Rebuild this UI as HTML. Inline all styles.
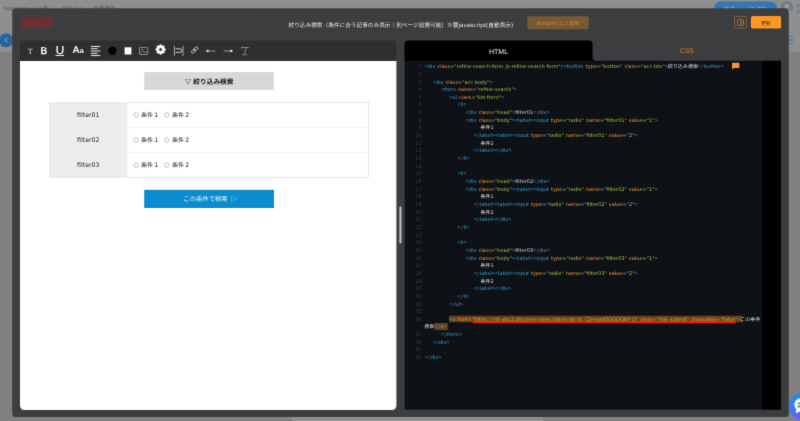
<!DOCTYPE html>
<html lang="ja">
<head>
<meta charset="utf-8">
<title>絞り込み検索</title>
<style>
html,body{margin:0;padding:0;width:800px;height:421px;overflow:hidden;background:#818181;}
#wrap{position:absolute;left:0;top:0;width:800px;height:421px;overflow:hidden;filter:url(#soft);}
#stage{position:absolute;left:0;top:0;width:8000px;height:4210px;transform:scale(0.1);transform-origin:0 0;overflow:hidden;text-rendering:geometricPrecision;
 font-family:"Liberation Sans","Noto Sans CJK JP",sans-serif;color:#fff;}
#stage div,#stage svg,#stage span.ab{position:absolute;box-sizing:border-box;}
.c{display:flex;align-items:center;justify-content:center;white-space:nowrap;}
.ab{position:absolute;}
.bgtxt{color:#5e5e62;font-size:55px;white-space:nowrap;line-height:1.1;}
.modal{background:#3c3d3f;border-radius:36px;}
.btn{border-radius:16px;font-size:50px;}
.cl{white-space:pre;font-family:"DejaVu Sans","Noto Sans CJK JP",sans-serif;font-size:50px;word-spacing:4.5px;line-height:76.5px;height:76.5px;color:#c9c9c9;}
.cl .p{font-family:"Liberation Sans",sans-serif;font-size:52px;}
.cl .p.o,.cl .p.q{font-family:"DejaVu Sans",sans-serif;font-size:50px;}
.cl .sl{display:inline-block;width:28px;text-align:center;}
.ln{left:4060px;width:156px;text-align:right;font-family:"DejaVu Sans",sans-serif;font-size:50px;line-height:76.5px;height:76.5px;color:#383e46;}
.t{color:#36a2da;} .a{color:#ee9a40;} .s{color:#aebf44;} .o{color:#8a9097;} .x{color:#d0d0d0;} .j{color:#d4d4d4;}
.hl{background:#6c3f17;padding:5.5px 4.5px 7.5px;}
.ul{}
.tb{color:#fff;line-height:1;white-space:nowrap;}
.cell{font-size:61px;color:#161616;white-space:nowrap;line-height:1;}
.rd{border:4.5px solid #6a6a6a;border-radius:50%;background:#fff;}
.dj{font-family:'DejaVu Sans',sans-serif;}
#title .dj,.btn .dj{position:relative;top:5px;}
.chat{border-radius:50%;background:linear-gradient(180deg,#1f8cf4 0%,#2e83f6 45%,#6a5cf2 100%);}
</style>
</head>
<body>

<svg width="0" height="0" style="position:absolute" aria-hidden="true"><filter id="soft" x="0" y="0" width="100%" height="100%" color-interpolation-filters="sRGB"><feConvolveMatrix order="3" kernelMatrix="1 8 1 8 64 8 1 8 1" divisor="100" edgeMode="duplicate" preserveAlpha="false"/></filter></svg>
<div id="wrap">
<div id="stage">
<!-- underlying page, dimmed by overlay -->
<div style="left:0px;top:0px;width:8000px;height:519px;background:#8f8f8f"></div>
<div style="left:0px;top:519px;width:8000px;height:3691px;background:#818181"></div>
<div style="left:0px;top:184px;width:8000px;height:4px;background:#898989"></div>
<div style="left:2917px;top:600px;width:2512px;height:3610px;background:#8f8f8f"></div>
<div class="bgtxt" style="left:40px;top:53px;font-weight:bold;font-size:50px;letter-spacing:1px">beyond</div>
<div class="bgtxt" style="left:216px;top:53px">ページ一覧</div>
<div class="bgtxt" style="left:616px;top:53px">デザイン</div>
<div class="bgtxt" style="left:934px;top:53px">外部連携</div>
<div class="c" style="left:7142px;top:16px;width:628px;height:124px;background:#3377b6;border-radius:62px;color:#a9bfd6;font-size:54px;padding-top:14px;">新規ページを追加</div>
<div style="left:7807px;top:13px;width:124px;height:124px;background:#747b83;border-radius:50%;overflow:hidden"><div style="left:39px;top:26px;width:46px;height:46px;background:#989ea4;border-radius:50%"></div><div style="left:19px;top:80px;width:86px;height:80px;background:#989ea4;border-radius:50%"></div></div>
<div class="bgtxt" style="left:7966px;top:22px;font-size:50px;color:#666">test</div>
<div class="bgtxt" style="left:7966px;top:86px;font-size:50px;color:#666">demo</div>
<div style="left:-10px;top:332px;width:140px;height:140px;background:#28649f;border-radius:50%"></div>
<svg class="ab" style="left:20px;top:360px;width:90px;height:80px" viewBox="2 36 9 8" ><path d="M7.6 37.6 L5.2 40.1 L7.6 42.6" fill="none" stroke="#93aec9" stroke-width="0.9"/></svg>
<svg class="ab" style="left:7860px;top:340px;width:120px;height:160px" viewBox="786 34 12 16" ><circle cx="790.3" cy="37.9" r="2.0" fill="none" stroke="#3c7dbd" stroke-width="1"/><circle cx="790.3" cy="42.4" r="2.0" fill="none" stroke="#3c7dbd" stroke-width="1"/></svg>

<!-- modal -->
<div class="modal" style="left:122px;top:83px;width:7766px;height:4087px;"></div>
<div class="btn c" style="left:200px;top:164px;width:331px;height:119px;background:#643134;color:#c4132b;padding-top:10px;">閉じる</div>
<div class="c" id="title" style="left:2004px;top:199px;width:4009px;height:100px;font-size:56.7px;color:#e6e6e6;">絞り込み検索（条件に合う記事のみ表示｜別ページ設置可能）※要<span class="dj">javascript(</span>自動表示<span class="dj">)</span></div>
<div class="btn c" style="left:5273px;top:162px;width:615px;height:130px;background:#775936;color:#d98c2b;font-size:50px;"><span class='dj'>Widget</span>として登録</div>
<svg class="ab" style="left:7340px;top:159px;width:131px;height:128px" viewBox="734 15.9 13.100000000000023 12.799999999999999" ><rect x="734.35" y="16.3" width="12.35" height="12.0" rx="1.6" fill="none" stroke="#b9782c" stroke-width="0.7"/><rect x="737.5" y="19.3" width="6.2" height="6.1" rx="0.5" fill="none" stroke="#d58a2a" stroke-width="0.6"/><path d="M740.4 19.3 V25.4 M740.4 21.4 H743.7 M740.4 23.4 H743.7" stroke="#d58a2a" stroke-width="0.5" fill="none"/></svg>
<div class="btn c" style="left:7509px;top:161px;width:302px;height:123px;background:#ff9823;color:#4a3210;padding-top:16px;">更新</div>

<!-- left: toolbar + preview -->
<div style="left:200px;top:406px;width:3764px;height:214px;background:#2e302f;border-radius:40px 40px 0 0;"></div>
<div style="left:200px;top:611px;width:3764px;height:3488px;background:#fff;border-radius:0 0 42px 42px;"></div>
<div class="tb" style="left:277px;top:472px;font-family:'Liberation Serif',serif;font-size:80px;color:#dedede">T</div>
<div class="tb" style="left:406px;top:456px;font-size:100px;-webkit-text-stroke:3.5px #fff">B</div>
<div class="tb" style="left:558px;top:444px;font-size:116px;-webkit-text-stroke:2.2px #fff">U</div>
<div style="left:556px;top:549px;width:84px;height:10px;background:#fff"></div>
<div class="tb" style="left:726px;top:444px;font-weight:bold;font-size:100px">A<span style="font-size:72px">a</span></div>
<svg class="ab" style="left:890px;top:440px;width:130px;height:140px" viewBox="89 44 13 14" ><rect x="90.9" y="45.949999999999996" width="9.40" height="0.9" fill="#fff"/><rect x="90.9" y="48.25" width="6.70" height="0.9" fill="#fff"/><rect x="90.9" y="50.55" width="9.40" height="0.9" fill="#fff"/><rect x="90.9" y="52.849999999999994" width="6.70" height="0.9" fill="#fff"/><rect x="90.9" y="55.15" width="9.40" height="0.9" fill="#fff"/></svg>
<svg class="ab" style="left:1060px;top:440px;width:140px;height:140px" viewBox="106 44 14 14" ><circle cx="112.4" cy="50.8" r="4.15" fill="#000"/></svg>
<svg class="ab" style="left:1230px;top:450px;width:100px;height:120px" viewBox="123 45 10 12" ><rect x="124.6" y="47.3" width="6.8" height="7.2" fill="#fff"/></svg>
<svg class="ab" style="left:1370px;top:450px;width:130px;height:120px" viewBox="137 45 13 12" ><rect x="139.4" y="47.4" width="8.3" height="7.1" rx="0.9" fill="none" stroke="#a9a9a9" stroke-width="0.75"/><path d="M139.8 53.6 L142.6 50.6 L144.6 52.6 L145.8 51.6 L147.4 53.4" fill="none" stroke="#a9a9a9" stroke-width="0.7"/><circle cx="142.0" cy="49.4" r="0.7" fill="#a9a9a9"/></svg>
<svg class="ab" style="left:1530px;top:420px;width:150px;height:150px" viewBox="153 42 15 15" ><path d="M159.77 44.72 L161.43 44.72 L161.53 45.61 L162.69 46.09 L163.39 45.53 L164.57 46.71 L164.01 47.41 L164.49 48.57 L165.38 48.67 L165.38 50.33 L164.49 50.43 L164.01 51.59 L164.57 52.29 L163.39 53.47 L162.69 52.91 L161.53 53.39 L161.43 54.28 L159.77 54.28 L159.67 53.39 L158.51 52.91 L157.81 53.47 L156.63 52.29 L157.19 51.59 L156.71 50.43 L155.82 50.33 L155.82 48.67 L156.71 48.57 L157.19 47.41 L156.63 46.71 L157.81 45.53 L158.51 46.09 L159.67 45.61 Z M162.30 49.5 A1.7 1.7 0 1 0 158.90 49.5 A1.7 1.7 0 1 0 162.30 49.5 Z" fill="#fff" fill-rule="evenodd" stroke="#fff" stroke-width="0.5" stroke-linejoin="round"/></svg>
<svg class="ab" style="left:1720px;top:440px;width:140px;height:140px" viewBox="172 44 14 14" ><path d="M174.4 45.9 V55.9 M183.0 45.9 V55.9" stroke="#c8c8c8" stroke-width="0.8" fill="none"/><path d="M175.6 48.8 H180.0 A1.8 1.8 0 0 1 180.0 52.4 H175.6" stroke="#d0d0d0" stroke-width="0.95" fill="none"/></svg>
<svg class="ab" style="left:1890px;top:440px;width:110px;height:120px" viewBox="189 44 11 12" ><g transform="rotate(-45 194.55 50.05)" fill="none" stroke="#e0e0e0" stroke-width="0.8"><rect x="190.75" y="48.75" width="4.4" height="2.6" rx="1.3"/><rect x="193.95" y="48.75" width="4.4" height="2.6" rx="1.3"/></g></svg>
<svg class="ab" style="left:2040px;top:460px;width:130px;height:100px" viewBox="204 46 13 10" ><path d="M207.2 51 H215.4" stroke="#bdbdbd" stroke-width="0.75"/><path d="M205.8 51 L208.4 49.6 V52.4 Z" fill="#fff"/></svg>
<svg class="ab" style="left:2220px;top:460px;width:130px;height:100px" viewBox="222 46 13 10" ><path d="M223.6 51 H231.6" stroke="#bdbdbd" stroke-width="0.75"/><path d="M233.1 51 L230.5 49.6 V52.4 Z" fill="#fff"/></svg>
<svg class="ab" style="left:2390px;top:450px;width:120px;height:120px" viewBox="239 45 12 12" ><path d="M241.6 47.5 H248.8 M246.2 47.6 L244.3 54.4 M242.4 54.7 H247.2" stroke="#bdbdbd" stroke-width="0.6" fill="none"/><path d="M241.2 47 L242.4 48.2 M242.4 47 L241.2 48.2" stroke="#d0d0d0" stroke-width="0.4"/></svg>

<div class="c" style="left:1443px;top:721px;width:1296px;height:178px;background:#d8d8d8;color:#111;font-weight:bold;font-size:67px;padding-bottom:4px;">▽ 絞り込み検索</div>
<div style="left:490px;top:1021px;width:3197px;height:756px;background:#fff;border:6px solid #d6d6d6;"></div>
<div style="left:495px;top:1027px;width:778px;height:745px;background:#ededed;"></div>
<div style="left:495px;top:1271px;width:3187px;height:4px;background:#e6e6e6;"></div>
<div style="left:495px;top:1523px;width:3187px;height:4px;background:#e6e6e6;"></div>
<div class="cell c" style="left:495px;top:1098px;width:776px;height:100px;font-size:62.8px;color:#1c1c1c"><span class="dj">filter01</span></div><div class="rd" style="left:1335.5px;top:1124.5px;width:49px;height:49px;"></div><div class="cell" style="left:1410px;top:1117.5px;height:61px">条件１</div><div class="rd" style="left:1644.5px;top:1124.5px;width:49px;height:49px;"></div><div class="cell" style="left:1719px;top:1117.5px;height:61px">条件２</div><div class="cell c" style="left:495px;top:1349px;width:776px;height:100px;font-size:62.8px;color:#1c1c1c"><span class="dj">filter02</span></div><div class="rd" style="left:1335.5px;top:1375.5px;width:49px;height:49px;"></div><div class="cell" style="left:1410px;top:1368.5px;height:61px">条件１</div><div class="rd" style="left:1644.5px;top:1375.5px;width:49px;height:49px;"></div><div class="cell" style="left:1719px;top:1368.5px;height:61px">条件２</div><div class="cell c" style="left:495px;top:1600px;width:776px;height:100px;font-size:62.8px;color:#1c1c1c"><span class="dj">filter03</span></div><div class="rd" style="left:1335.5px;top:1626.5px;width:49px;height:49px;"></div><div class="cell" style="left:1410px;top:1619.5px;height:61px">条件１</div><div class="rd" style="left:1644.5px;top:1626.5px;width:49px;height:49px;"></div><div class="cell" style="left:1719px;top:1619.5px;height:61px">条件２</div>
<div class="c" style="left:1442px;top:1898px;width:1298px;height:182px;background:#0b8bd0;color:#e6f3fb;font-size:63.2px;padding-bottom:12px;padding-left:26px;">この条件で検索&nbsp; ▷</div>

<!-- splitter -->
<div style="left:3994px;top:2066px;width:20px;height:369px;background:#c9c9c9;border-radius:10px"></div>

<!-- right: tabs + editor -->
<div class="c" style="left:4045px;top:406px;width:1880px;height:209px;background:#000;border-radius:34px 34px 0 0;font-size:70px;color:#f2f2f2;">HTML</div>
<svg class="ab" style="left:5920px;top:560px;width:60px;height:52px" viewBox="592 56 6 5.200000000000003" ><path d="M592.4 56.4 V61 H597.0 A4.6 4.6 0 0 1 592.4 56.4 Z" fill="#000"/></svg>
<div class="c" style="left:5925px;top:406px;width:1885px;height:202px;font-size:69px;color:#d8872b;">CSS</div>
<div style="left:4047px;top:608px;width:3763px;height:3488px;background:#0e1116;"></div>
<div style="left:7620px;top:608px;width:190px;height:3488px;background:#000;"></div>
<div style="left:4490px;top:3157px;width:2931px;height:65px;background:#6c3f17;"></div>
<div style="left:4344px;top:3230px;width:134px;height:70px;background:#6c3f17;"></div>
<div class="ln" style="top:625.3px">1</div>
<div class="cl" style="left:4248px;top:625.3px;letter-spacing:0.3px;"><span class="p t">&lt;</span><span class="t">div</span> <span class="a">class</span><span class="p o">=</span><span class="p s q">"</span><span class="s">refine-search-form js-refine-search-form</span><span class="p s q">"</span><span class="p t">&gt;</span><span class="p t">&lt;</span><span class="t">button</span> <span class="a">type</span><span class="p o">=</span><span class="p s q">"</span><span class="s">button</span><span class="p s q">"</span> <span class="a">class</span><span class="p o">=</span><span class="p s q">"</span><span class="s">acc-btn</span><span class="p s q">"</span><span class="p t">&gt;</span><span class="x"><span class="j">絞り込み検索</span></span><span class="p t">&lt;</span><span class="t sl">/</span><span class="t">button</span><span class="p t">&gt;</span></div>
<div class="ln" style="top:705.3px">2</div>
<div class="ln" style="top:785.3px">3</div>
<div class="cl" style="left:4330px;top:785.3px;"><span class="p t">&lt;</span><span class="t">div</span> <span class="a">class</span><span class="p o">=</span><span class="p s q">"</span><span class="s">acc-body</span><span class="p s q">"</span><span class="p t">&gt;</span></div>
<div class="ln" style="top:855.3px">4</div>
<div class="cl" style="left:4412px;top:855.3px;"><span class="p t">&lt;</span><span class="t">form</span> <span class="a">name</span><span class="p o">=</span><span class="p s q">"</span><span class="s">refine-search</span><span class="p s q">"</span><span class="p t">&gt;</span></div>
<div class="ln" style="top:935.3px">5</div>
<div class="cl" style="left:4494px;top:935.3px;"><span class="p t">&lt;</span><span class="t">ul</span> <span class="a">class</span><span class="p o">=</span><span class="p s q">"</span><span class="s">list-form</span><span class="p s q">"</span><span class="p t">&gt;</span></div>
<div class="ln" style="top:1005.3px">6</div>
<div class="cl" style="left:4576px;top:1005.3px;"><span class="p t">&lt;</span><span class="t">li</span><span class="p t">&gt;</span></div>
<div class="ln" style="top:1085.3px">7</div>
<div class="cl" style="left:4658px;top:1085.3px;"><span class="p t">&lt;</span><span class="t">div</span> <span class="a">class</span><span class="p o">=</span><span class="p s q">"</span><span class="s">head</span><span class="p s q">"</span><span class="p t">&gt;</span><span class="x">filter01</span><span class="p t">&lt;</span><span class="t sl">/</span><span class="t">div</span><span class="p t">&gt;</span></div>
<div class="ln" style="top:1165.3px">8</div>
<div class="cl" style="left:4658px;top:1165.3px;"><span class="p t">&lt;</span><span class="t">div</span> <span class="a">class</span><span class="p o">=</span><span class="p s q">"</span><span class="s">body</span><span class="p s q">"</span><span class="p t">&gt;</span><span class="p t">&lt;</span><span class="t">label</span><span class="p t">&gt;</span><span class="p t">&lt;</span><span class="t">input</span> <span class="a">type</span><span class="p o">=</span><span class="p s q">"</span><span class="s">radio</span><span class="p s q">"</span> <span class="a">name</span><span class="p o">=</span><span class="p s q">"</span><span class="s">filter01</span><span class="p s q">"</span> <span class="a">value</span><span class="p o">=</span><span class="p s q">"</span><span class="s">1</span><span class="p s q">"</span><span class="p t">&gt;</span></div>
<div class="ln" style="top:1235.3px">9</div>
<div class="cl" style="left:4805.6px;top:1235.3px;"><span class="x"><span class="j">条件</span>1</span></div>
<div class="ln" style="top:1315.3px">10</div>
<div class="cl" style="left:4740px;top:1315.3px;"><span class="p t">&lt;</span><span class="t sl">/</span><span class="t">label</span><span class="p t">&gt;</span><span class="p t">&lt;</span><span class="t">label</span><span class="p t">&gt;</span><span class="p t">&lt;</span><span class="t">input</span> <span class="a">type</span><span class="p o">=</span><span class="p s q">"</span><span class="s">radio</span><span class="p s q">"</span> <span class="a">name</span><span class="p o">=</span><span class="p s q">"</span><span class="s">filter01</span><span class="p s q">"</span> <span class="a">value</span><span class="p o">=</span><span class="p s q">"</span><span class="s">2</span><span class="p s q">"</span><span class="p t">&gt;</span></div>
<div class="ln" style="top:1395.3px">11</div>
<div class="cl" style="left:4805.6px;top:1395.3px;"><span class="x"><span class="j">条件</span>2</span></div>
<div class="ln" style="top:1465.3px">12</div>
<div class="cl" style="left:4740px;top:1465.3px;"><span class="p t">&lt;</span><span class="t sl">/</span><span class="t">label</span><span class="p t">&gt;</span><span class="p t">&lt;</span><span class="t sl">/</span><span class="t">div</span><span class="p t">&gt;</span></div>
<div class="ln" style="top:1545.3px">13</div>
<div class="cl" style="left:4576px;top:1545.3px;"><span class="p t">&lt;</span><span class="t sl">/</span><span class="t">li</span><span class="p t">&gt;</span></div>
<div class="ln" style="top:1625.3px">14</div>
<div class="ln" style="top:1695.3px">15</div>
<div class="cl" style="left:4576px;top:1695.3px;"><span class="p t">&lt;</span><span class="t">li</span><span class="p t">&gt;</span></div>
<div class="ln" style="top:1775.3px">16</div>
<div class="cl" style="left:4658px;top:1775.3px;"><span class="p t">&lt;</span><span class="t">div</span> <span class="a">class</span><span class="p o">=</span><span class="p s q">"</span><span class="s">head</span><span class="p s q">"</span><span class="p t">&gt;</span><span class="x">filter02</span><span class="p t">&lt;</span><span class="t sl">/</span><span class="t">div</span><span class="p t">&gt;</span></div>
<div class="ln" style="top:1855.3px">17</div>
<div class="cl" style="left:4658px;top:1855.3px;"><span class="p t">&lt;</span><span class="t">div</span> <span class="a">class</span><span class="p o">=</span><span class="p s q">"</span><span class="s">body</span><span class="p s q">"</span><span class="p t">&gt;</span><span class="p t">&lt;</span><span class="t">label</span><span class="p t">&gt;</span><span class="p t">&lt;</span><span class="t">input</span> <span class="a">type</span><span class="p o">=</span><span class="p s q">"</span><span class="s">radio</span><span class="p s q">"</span> <span class="a">name</span><span class="p o">=</span><span class="p s q">"</span><span class="s">filter02</span><span class="p s q">"</span> <span class="a">value</span><span class="p o">=</span><span class="p s q">"</span><span class="s">1</span><span class="p s q">"</span><span class="p t">&gt;</span></div>
<div class="ln" style="top:1925.3px">18</div>
<div class="cl" style="left:4805.6px;top:1925.3px;"><span class="x"><span class="j">条件</span>1</span></div>
<div class="ln" style="top:2005.3px">19</div>
<div class="cl" style="left:4740px;top:2005.3px;"><span class="p t">&lt;</span><span class="t sl">/</span><span class="t">label</span><span class="p t">&gt;</span><span class="p t">&lt;</span><span class="t">label</span><span class="p t">&gt;</span><span class="p t">&lt;</span><span class="t">input</span> <span class="a">type</span><span class="p o">=</span><span class="p s q">"</span><span class="s">radio</span><span class="p s q">"</span> <span class="a">name</span><span class="p o">=</span><span class="p s q">"</span><span class="s">filter02</span><span class="p s q">"</span> <span class="a">value</span><span class="p o">=</span><span class="p s q">"</span><span class="s">2</span><span class="p s q">"</span><span class="p t">&gt;</span></div>
<div class="ln" style="top:2085.3px">20</div>
<div class="cl" style="left:4805.6px;top:2085.3px;"><span class="x"><span class="j">条件</span>2</span></div>
<div class="ln" style="top:2155.3px">21</div>
<div class="cl" style="left:4740px;top:2155.3px;"><span class="p t">&lt;</span><span class="t sl">/</span><span class="t">label</span><span class="p t">&gt;</span><span class="p t">&lt;</span><span class="t sl">/</span><span class="t">div</span><span class="p t">&gt;</span></div>
<div class="ln" style="top:2235.3px">22</div>
<div class="cl" style="left:4576px;top:2235.3px;"><span class="p t">&lt;</span><span class="t sl">/</span><span class="t">li</span><span class="p t">&gt;</span></div>
<div class="ln" style="top:2315.3px">23</div>
<div class="ln" style="top:2385.3px">24</div>
<div class="cl" style="left:4576px;top:2385.3px;"><span class="p t">&lt;</span><span class="t">li</span><span class="p t">&gt;</span></div>
<div class="ln" style="top:2465.3px">25</div>
<div class="cl" style="left:4658px;top:2465.3px;"><span class="p t">&lt;</span><span class="t">div</span> <span class="a">class</span><span class="p o">=</span><span class="p s q">"</span><span class="s">head</span><span class="p s q">"</span><span class="p t">&gt;</span><span class="x">filter03</span><span class="p t">&lt;</span><span class="t sl">/</span><span class="t">div</span><span class="p t">&gt;</span></div>
<div class="ln" style="top:2545.3px">26</div>
<div class="cl" style="left:4658px;top:2545.3px;"><span class="p t">&lt;</span><span class="t">div</span> <span class="a">class</span><span class="p o">=</span><span class="p s q">"</span><span class="s">body</span><span class="p s q">"</span><span class="p t">&gt;</span><span class="p t">&lt;</span><span class="t">label</span><span class="p t">&gt;</span><span class="p t">&lt;</span><span class="t">input</span> <span class="a">type</span><span class="p o">=</span><span class="p s q">"</span><span class="s">radio</span><span class="p s q">"</span> <span class="a">name</span><span class="p o">=</span><span class="p s q">"</span><span class="s">filter03</span><span class="p s q">"</span> <span class="a">value</span><span class="p o">=</span><span class="p s q">"</span><span class="s">1</span><span class="p s q">"</span><span class="p t">&gt;</span></div>
<div class="ln" style="top:2615.3px">27</div>
<div class="cl" style="left:4805.6px;top:2615.3px;"><span class="x"><span class="j">条件</span>1</span></div>
<div class="ln" style="top:2695.3px">28</div>
<div class="cl" style="left:4740px;top:2695.3px;"><span class="p t">&lt;</span><span class="t sl">/</span><span class="t">label</span><span class="p t">&gt;</span><span class="p t">&lt;</span><span class="t">label</span><span class="p t">&gt;</span><span class="p t">&lt;</span><span class="t">input</span> <span class="a">type</span><span class="p o">=</span><span class="p s q">"</span><span class="s">radio</span><span class="p s q">"</span> <span class="a">name</span><span class="p o">=</span><span class="p s q">"</span><span class="s">filter03</span><span class="p s q">"</span> <span class="a">value</span><span class="p o">=</span><span class="p s q">"</span><span class="s">2</span><span class="p s q">"</span><span class="p t">&gt;</span></div>
<div class="ln" style="top:2775.3px">29</div>
<div class="cl" style="left:4805.6px;top:2775.3px;"><span class="x"><span class="j">条件</span>2</span></div>
<div class="ln" style="top:2845.3px">30</div>
<div class="cl" style="left:4740px;top:2845.3px;"><span class="p t">&lt;</span><span class="t sl">/</span><span class="t">label</span><span class="p t">&gt;</span><span class="p t">&lt;</span><span class="t sl">/</span><span class="t">div</span><span class="p t">&gt;</span></div>
<div class="ln" style="top:2925.3px">31</div>
<div class="cl" style="left:4576px;top:2925.3px;"><span class="p t">&lt;</span><span class="t sl">/</span><span class="t">li</span><span class="p t">&gt;</span></div>
<div class="ln" style="top:3005.3px">32</div>
<div class="cl" style="left:4494px;top:3005.3px;"><span class="p t">&lt;</span><span class="t sl">/</span><span class="t">ul</span><span class="p t">&gt;</span></div>
<div class="ln" style="top:3075.3px">33</div>
<div class="ln" style="top:3155.3px">34</div>
<div class="cl" style="left:4494px;top:3155.3px;"><span class="p t">&lt;</span><span class="t">a</span> <span class="a">href</span><span class="p o">=</span><span class="p s q">"</span><span class="s">https:<span class="sl">/</span><span class="sl">/</span>sb-abc2.discover-news.tokyo<span class="sl">/</span>ab<span class="sl">/</span>Jc_CDmwpOGODGKP-O</span><span class="p s q">"</span> <span class="a">class</span><span class="p o">=</span><span class="p s q">"</span><span class="s">link-submit</span><span class="p s q">"</span> <span class="a">draggable</span><span class="p o">=</span><span class="p s q">"</span><span class="s">false</span><span class="p s q">"</span><span class="p t">&gt;</span><span class="x"><span class="j">この条件</span></span></div>
<div class="cl" style="left:4243px;top:3225.3px;"><span class="x"><span class="j">検索</span></span><span class="p t">&lt;</span><span class="t sl">/</span><span class="t">a</span><span class="p t">&gt;</span></div>
<div class="ln" style="top:3305.3px">35</div>
<div class="cl" style="left:4412px;top:3305.3px;"><span class="p t">&lt;</span><span class="t sl">/</span><span class="t">form</span><span class="p t">&gt;</span></div>
<div class="ln" style="top:3385.3px">36</div>
<div class="cl" style="left:4330px;top:3385.3px;"><span class="p t">&lt;</span><span class="t sl">/</span><span class="t">div</span><span class="p t">&gt;</span></div>
<div class="ln" style="top:3455.3px">37</div>
<div class="ln" style="top:3535.3px">38</div>
<div class="cl" style="left:4248px;top:3535.3px;"><span class="p t">&lt;</span><span class="t sl">/</span><span class="t">div</span><span class="p t">&gt;</span></div>
<div style="left:4724px;top:3210px;width:2636px;height:22px;background:#ff1a0f;"></div>
<svg class="ab" style="left:7310px;top:620px;width:100px;height:80px" viewBox="731 62 10 8" ><path d="M732.0 62.7 H739.3 V68.0 H734.0 L732.0 69.5 Z" fill="#f39a26"/></svg>
<div class="ab chat" style="left:7889px;top:3928px;width:276px;height:276px"></div><svg class="ab" style="left:7920px;top:3950px;width:120px;height:220px" viewBox="792 395 12 22" ><circle cx="801.0" cy="404.7" r="6.6" fill="#fff"/><path d="M796.3 408.2 L795.9 413.2 L801.2 410.9 Z" fill="#fff"/><rect x="797.6" y="402.4" width="2.6" height="1.9" rx="0.6" fill="#3f7cf3"/><rect x="797.6" y="405.6" width="2.6" height="1.9" rx="0.6" fill="#3f7cf3"/></svg>
</div>
</div>

</body>
</html>
